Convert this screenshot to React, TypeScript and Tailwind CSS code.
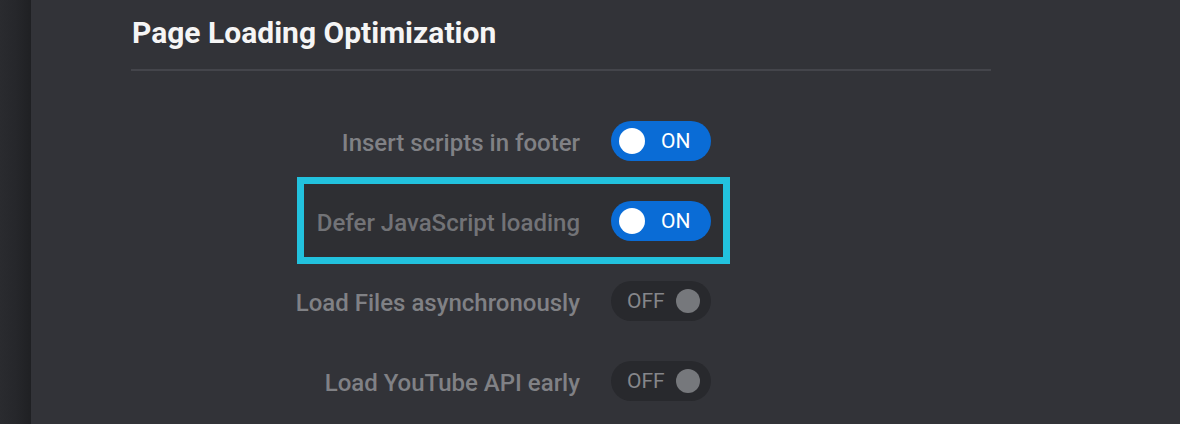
import React from 'react';

// ============================================
// Types
// ============================================

interface SettingRow {
  label: string;
  on: boolean;
  highlighted?: boolean;
}

const rows: SettingRow[] = [
  { label: 'Insert scripts in footer', on: true },
  { label: 'Defer JavaScript loading', on: true, highlighted: true },
  { label: 'Load Files asynchronously', on: false },
  { label: 'Load YouTube API early', on: false },
];

// ============================================
// Toggle
// ============================================

const Toggle: React.FC<{ on: boolean }> = ({ on }) => {
  if (on) {
    return (
      <div className="w-[100px] h-10 rounded-full bg-[#0a6cd6] flex items-center pl-[8px]">
        <span className="w-[26px] h-[26px] rounded-full bg-white" />
        <span className="ml-[16px] text-[21px] leading-none text-white">ON</span>
      </div>
    );
  }

  return (
    <div className="w-[100px] h-10 rounded-full bg-[#28292d] flex items-center pl-[16px]">
      <span className="text-[21px] leading-none text-[#85868a]">OFF</span>
      <span className="ml-auto mr-[11px] w-6 h-6 rounded-full bg-[#76787c]" />
    </div>
  );
};

// ============================================
// App
// ============================================

const App: React.FC = () => {
  return (
    <div
      className="w-[1180px] h-[424px] overflow-hidden flex bg-[#323338]"
      style={{ fontFamily: 'Roboto, "Liberation Sans", sans-serif' }}
    >
      {/* Sidebar edge */}
      <div className="w-[31px] shrink-0 bg-gradient-to-r from-[#2a2b2f] via-[#26272b] to-[#1f2023]" />

      <div className="pl-[100px] pt-[15px]">
        <div className="w-[860px]">
          <h1 className="text-[30px] leading-[36px] font-bold text-[#f5f5f5] pl-[1px]">
            Page Loading Optimization
          </h1>
          <div className="mt-[18px] h-[2px] bg-[#44454b]" />

          <div className="mt-[50px] flex flex-col gap-10">
            {rows.map((row) => (
              <div key={row.label} className="relative flex items-center h-10">
                {row.highlighted && (
                  <div className="absolute left-[166px] top-[-24px] w-[433px] h-[87px] border-[7px] border-[#22c2de] bg-[#2e2f33]" />
                )}
                <div
                  className={`relative w-[449px] pt-[4px] text-right text-[24px] font-medium ${
                    row.highlighted ? 'text-[#727377]' : 'text-[#808185]'
                  }`}
                >
                  {row.label}
                </div>
                <div className="relative ml-[31px]">
                  <Toggle on={row.on} />
                </div>
              </div>
            ))}
          </div>
        </div>
      </div>
    </div>
  );
};

export default App;
